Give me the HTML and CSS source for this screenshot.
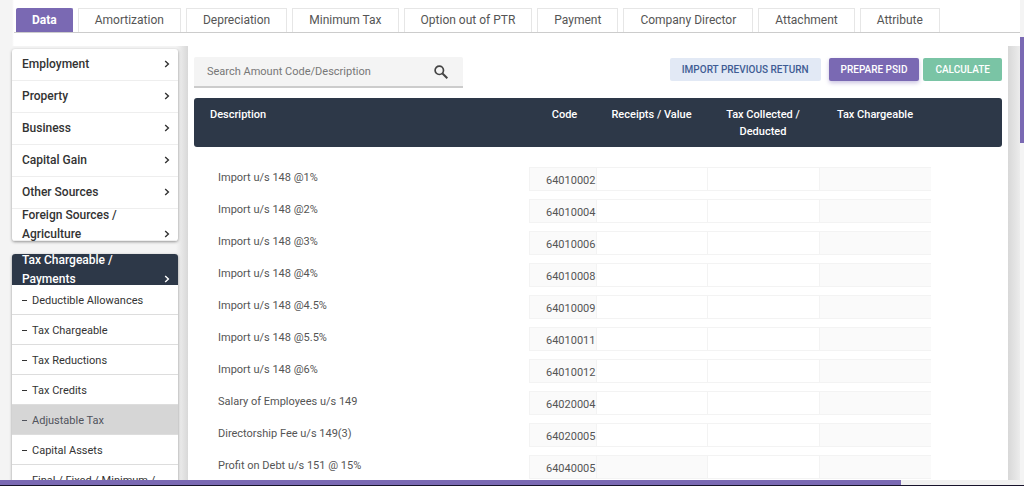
FILE: index.html
```html
<!DOCTYPE html>
<html lang="en">
<head>
<meta charset="utf-8">
<title>Income Tax Return</title>
<link rel="stylesheet" href="styles.css">
</head>
<body>
<svg class="sprite" aria-hidden="true">
  <symbol id="chevron" viewBox="0 0 6 8"><path d="M1.2 1 4.4 4 1.2 7" fill="none" stroke="currentColor" stroke-width="1.4"/></symbol>
</svg>
<div class="app">
  <div class="page">
    <nav class="tabs">
      <a class="tab active" href="#data">Data</a>
      <a class="tab" href="#amortization">Amortization</a>
      <a class="tab" href="#depreciation">Depreciation</a>
      <a class="tab" href="#minimum">Minimum Tax</a>
      <a class="tab" href="#option">Option out of PTR</a>
      <a class="tab" href="#payment">Payment</a>
      <a class="tab" href="#director">Company Director</a>
      <a class="tab" href="#attachment">Attachment</a>
      <a class="tab" href="#attribute">Attribute</a>
    </nav>
    <div class="body">
      <aside class="sidebar">
        <div class="card">
          <button class="group"><span class="label">Employment<svg class="chev"><use href="#chevron"/></svg></span></button>
          <button class="group"><span class="label">Property<svg class="chev"><use href="#chevron"/></svg></span></button>
          <button class="group"><span class="label">Business<svg class="chev"><use href="#chevron"/></svg></span></button>
          <button class="group"><span class="label">Capital Gain<svg class="chev"><use href="#chevron"/></svg></span></button>
          <button class="group"><span class="label">Other Sources<svg class="chev"><use href="#chevron"/></svg></span></button>
          <button class="group"><span class="label">Foreign Sources /<br>Agriculture<svg class="chev"><use href="#chevron"/></svg></span></button>
        </div>
        <div class="card">
          <button class="group open"><span class="label">Tax Chargeable /<br>Payments<svg class="chev"><use href="#chevron"/></svg></span></button>
          <a class="sub" href="#s1">Deductible Allowances</a>
          <a class="sub" href="#s2">Tax Chargeable</a>
          <a class="sub" href="#s3">Tax Reductions</a>
          <a class="sub" href="#s4">Tax Credits</a>
          <a class="sub current" href="#s5">Adjustable Tax</a>
          <a class="sub" href="#s6">Capital Assets</a>
          <a class="sub" href="#s7">Final / Fixed / Minimum /</a>
        </div>
      </aside>
      <main class="panel">
        <div class="toolbar">
          <label class="search">
            <input type="text" placeholder="Search Amount Code/Description" aria-label="Search Amount Code/Description">
            <svg class="glass" viewBox="0 0 14 14"><circle cx="5.3" cy="5.3" r="4.2" fill="none" stroke="currentColor" stroke-width="1.7"/><path d="M8.5 8.5 13.3 13.3" stroke="currentColor" stroke-width="2"/></svg>
          </label>
          <div class="actions">
            <button class="btn import">IMPORT PREVIOUS RETURN</button>
            <button class="btn prepare">PREPARE PSID</button>
            <button class="btn calculate">CALCULATE</button>
          </div>
        </div>
        <table class="grid">
          <colgroup><col><col class="c-code"><col class="c-val"><col class="c-amt"><col class="c-amt"><col class="c-end"></colgroup>
          <thead><tr><th>Description</th><th>Code</th><th>Receipts / Value</th><th>Tax Collected /<br>Deducted</th><th>Tax Chargeable</th><th></th></tr></thead>
          <tbody id="rows"></tbody>
        </table>
      </main>
    </div>
    <div class="vtrack"><div class="vthumb"></div></div>
  </div>
  <div class="htrack"><div class="hthumb"></div></div>
</div>
<script src="rows.js"></script>
</body>
</html>
```

FILE: rows.js
```js
const rows = [
  ["Import u/s 148 @1%", "64010002"],
  ["Import u/s 148 @2%", "64010004"],
  ["Import u/s 148 @3%", "64010006"],
  ["Import u/s 148 @4%", "64010008"],
  ["Import u/s 148 @4.5%", "64010009"],
  ["Import u/s 148 @5.5%", "64010011"],
  ["Import u/s 148 @6%", "64010012"],
  ["Salary of Employees u/s 149", "64020004"],
  ["Directorship Fee u/s 149(3)", "64020005"],
  ["Profit on Debt u/s 151 @ 15%", "64040005", true]
];
document.getElementById("rows").innerHTML = rows.map(([name, code, locked]) => `<tr>
  <td class="name">${name}</td>
  <td><span class="code">${code}</span></td>
  <td><input class="field" type="text" aria-label="${name} receipts" ${locked ? "disabled" : ""}></td>
  <td><input class="field" type="text" aria-label="${name} collected"></td>
  <td><input class="field" type="text" aria-label="${name} chargeable" disabled></td>
  <td></td>
</tr>`).join("");
```

FILE: styles.css
```css
* { box-sizing: border-box; }

body {
  margin: 0;
  font-family: Roboto, "Liberation Sans", sans-serif;
  font-size: 12px;
  color: #555;
  background: #fff;
}

button, input { font: inherit; }
.sprite { display: none; }

.app {
  display: flex;
  flex-direction: column;
  height: 100vh;
  overflow: hidden;
}

.page {
  flex: 1;
  min-height: 0;
  display: grid;
  grid-template-columns: minmax(0, 1fr) 4px;
  grid-template-rows: auto minmax(0, 1fr);
  background: linear-gradient(90deg, #f4f4f4 12px, #fff 14px);
}

.tabs {
  display: flex;
  gap: 5px;
  margin-left: 14px;
  padding: 8px 2px 0;
  border-bottom: 1px solid #ccc;
}

.tab {
  height: 24px;
  padding: 0 16px;
  border: 1px solid #e6e6e6;
  border-bottom: 0;
  line-height: 23px;
  color: #555;
  text-decoration: none;
}

.tab.active {
  padding: 0 15px;
  border-color: #7a69b3;
  border-radius: 2px 2px 0 0;
  background: #7a69b3;
  color: #fff;
  font-weight: 700;
}

.body {
  grid-row: 2;
  display: flex;
  min-height: 0;
  margin-top: 13px;
  padding-right: 12px;
  background: linear-gradient(90deg, #f4f4f4 176px, #d8d8d8 188px, #d8d8d8 calc(100% - 12px), #ececec);
}

.sidebar {
  flex: none;
  width: 188px;
  padding: 3px 10px 0 12px;
}

.card {
  margin-bottom: 13px;
  border-radius: 3px;
  background: #fff;
  box-shadow: 0 1px 3px rgba(0, 0, 0, .4);
  overflow: hidden;
}

.group {
  display: flex;
  align-items: center;
  width: 100%;
  height: 32px;
  padding: 0 8px 0 10px;
  border: 0;
  border-bottom: 1px solid #eee;
  background: none;
  color: #333;
  font-weight: 500;
  text-align: left;
}

.group.open {
  height: 31px;
  border: 0;
  background: #2d3848;
  color: #fff;
}

.label {
  position: relative;
  flex: 1;
  line-height: 19px;
}

.chev {
  position: absolute;
  right: 0;
  bottom: 6px;
  width: 6px;
  height: 8px;
}

.sub {
  display: flex;
  align-items: center;
  height: 30px;
  padding: 2px 10px 0;
  border-bottom: 1px solid #ddd;
  color: #333;
  font-size: 11px;
  text-decoration: none;
  white-space: nowrap;
}

.sub::before {
  content: "";
  width: 5px;
  height: 1px;
  margin-right: 5px;
  background: currentColor;
}

.sub.current { background: #d6d6d6; color: #50535c; }

.panel {
  flex: 1;
  min-width: 0;
  padding: 11px 6px 0;
  background: #fff;
}

.toolbar {
  display: flex;
  justify-content: space-between;
  align-items: flex-start;
  margin-bottom: 10px;
}

.search {
  display: flex;
  align-items: center;
  width: 269px;
  height: 31px;
  padding: 0 15px 0 13px;
  border-bottom: 2px solid #ccc;
  border-radius: 2px 2px 0 0;
  background: #f4f4f4;
  color: #444;
}

.search input {
  flex: 1;
  min-width: 0;
  padding: 0;
  border: 0;
  background: none;
  font-size: 11px;
}

.search input::placeholder { color: #777; }
.glass { width: 14px; height: 14px; }

.actions { display: flex; }

.btn {
  height: 23px;
  margin-top: 1px;
  padding: 0 12px;
  border: 0;
  border-radius: 2px;
  font-size: 10px;
  font-weight: 500;
}

.import { margin-right: 8px; background: #e2e9f5; color: #3f5c94; }
.prepare { margin-right: 4px; background: #7a69b3; color: #fff; box-shadow: 0 2px 4px rgba(122, 105, 179, .4); }
.calculate { background: #7ac4a5; color: #fff; }

.grid {
  width: 100%;
  table-layout: fixed;
  border-collapse: separate;
  border-spacing: 0;
}

.c-code { width: 67px; }
.c-val { width: 111px; }
.c-amt { width: 112px; }
.c-end { width: 71px; }

th {
  height: 49px;
  padding: 8px 0 0;
  background: #2d3848;
  color: #fff;
  font-size: 11px;
  font-weight: 500;
  line-height: 17px;
  vertical-align: top;
}

th:first-child { padding-left: 16px; border-radius: 3px 0 0 3px; text-align: left; }
th:nth-child(2) { padding-left: 4px; }
th:last-child { border-radius: 0 3px 3px 0; }

tbody::before { content: ""; display: block; height: 16px; }

td { height: 32px; padding: 0; font-size: 11px; vertical-align: middle; }
td.name { padding: 0 0 3px 24px; }

.code, .field {
  display: block;
  width: 100%;
  height: 24px;
  border: 1px solid #f3f3f3;
  border-right: 0;
}

.code {
  padding: 1px 0 0 16px;
  background: #fafafa;
  line-height: 23px;
}

.field { padding: 0 8px; background: #fff; color: #555; }
.field:disabled { background: #fafafa; }

.vtrack { grid-column: 2; grid-row: 1 / 3; padding-top: 37px; background: #f4f4f4; }
.vthumb { height: 106px; background: #7a69b3; }

.htrack { height: 6px; border-bottom: 1px solid #17132b; background: #f0f0f0; }
.hthumb { width: 88%; height: 5px; background: #7a69b3; }
```
